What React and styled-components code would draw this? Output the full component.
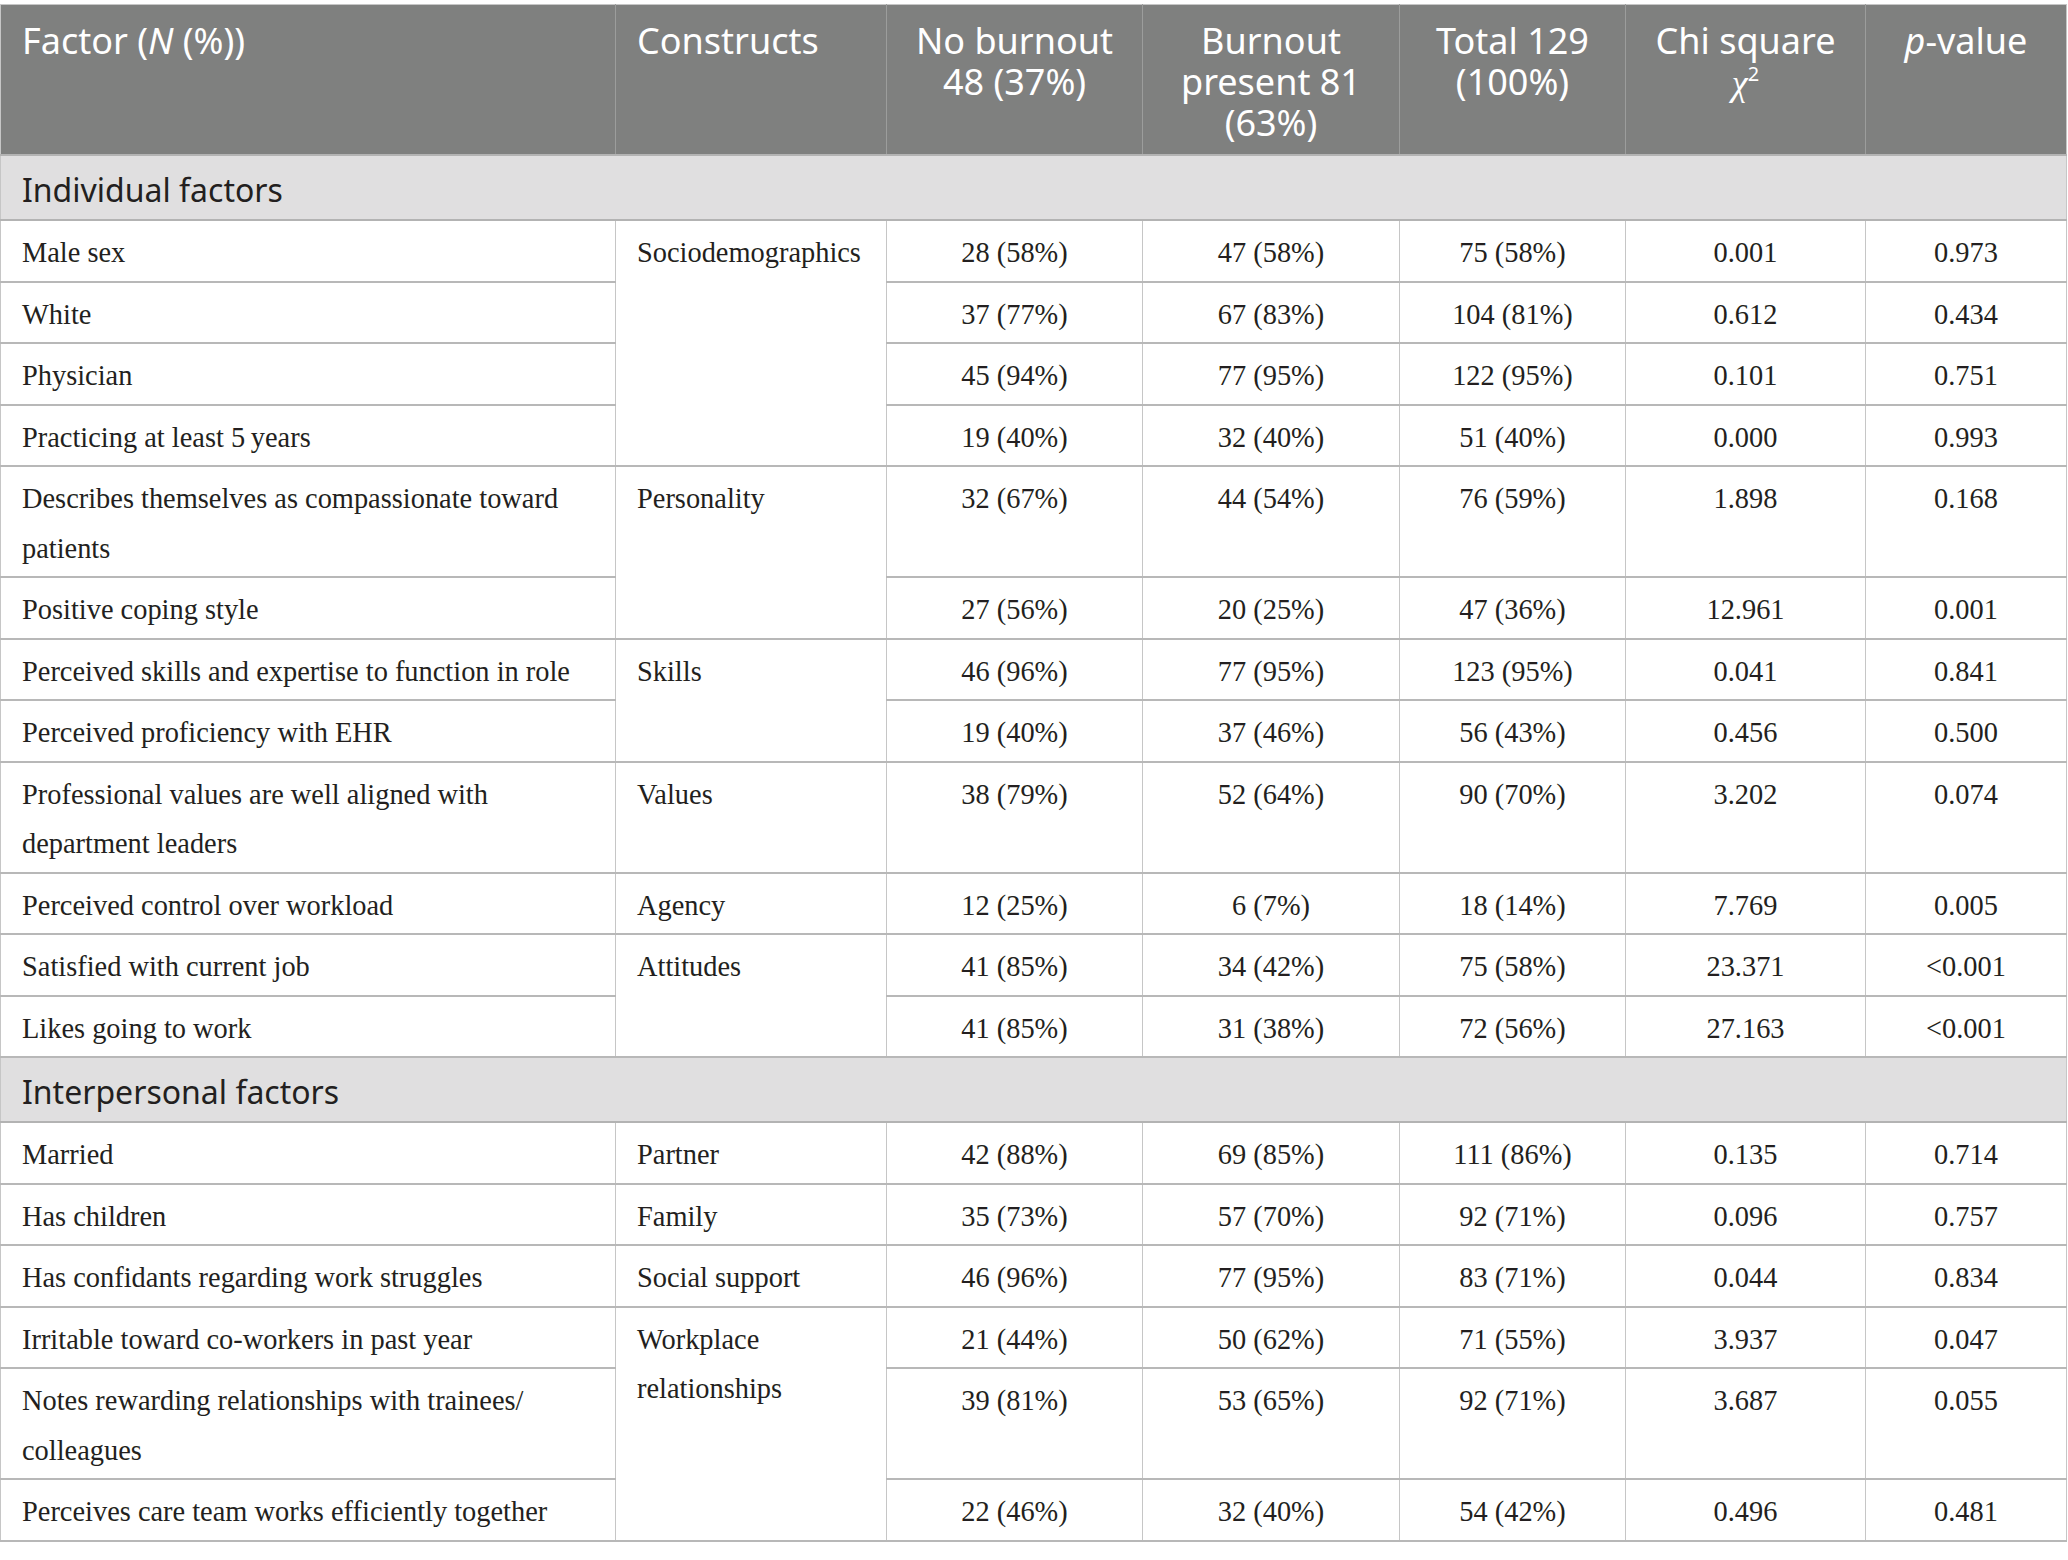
import React from 'react';
import styled, { createGlobalStyle } from 'styled-components';

const GlobalStyle = createGlobalStyle`
  html, body {
    margin: 0;
    padding: 0;
    background: #ffffff;
  }
`;

const Page = styled.div`
  padding-top: 4px;
  width: 2068px;
`;

const Table = styled.table`
  width: 2066px;
  table-layout: fixed;
  border-collapse: collapse;
  border: 1px solid #c6c6c6;
  border-bottom: 2px solid #b3b3b3;
`;

const HeadCell = styled.th`
  background: #7f807f;
  color: #ffffff;
  font-family: "Noto Sans", "Open Sans", sans-serif;
  font-weight: 400;
  font-size: 36px;
  line-height: 41px;
  text-align: ${(p) => p.$align || 'center'};
  vertical-align: top;
  padding: 15px 21px 11px;
  border-left: 1px solid #9c9d9c;
  border-bottom: 2px solid #b3b3b3;
  &:first-child {
    border-left: none;
  }
`;

const BandCell = styled.td`
  background: #e0dfe0;
  color: #231f20;
  font-family: "Noto Sans", "Open Sans", sans-serif;
  font-size: 32px;
  line-height: 41px;
  padding: 13px 21px 9px;
  border-bottom: 2px solid #b3b3b3;
`;

const Cell = styled.td`
  color: #231f20;
  font-family: "Liberation Serif", "Times New Roman", serif;
  font-size: 28.4px;
  line-height: 49.5px;
  text-align: ${(p) => p.$align || 'center'};
  vertical-align: top;
  padding: 7px 21px 3px;
  border-left: 1px solid #c6c6c6;
  border-bottom: 2px solid #b8b8b8;
  &:first-child {
    border-left: none;
  }
`;

const Em = styled.i`
  font-style: italic;
`;

const Chi = styled.span`
  font-family: "Liberation Serif", serif;
  font-style: italic;
  font-size: 36px;
`;

const Sup = styled.sup`
  font-size: 20px;
  line-height: 0;
  vertical-align: 14px;
`;

const widths = [615, 271, 256, 257, 226, 240, 201];

const sections = [
  {
    title: 'Individual factors',
    rows: [
      ['Male sex', ['Sociodemographics', 4], '28 (58%)', '47 (58%)', '75 (58%)', '0.001', '0.973'],
      ['White', null, '37 (77%)', '67 (83%)', '104 (81%)', '0.612', '0.434'],
      ['Physician', null, '45 (94%)', '77 (95%)', '122 (95%)', '0.101', '0.751'],
      ['Practicing at least 5\u2009years', null, '19 (40%)', '32 (40%)', '51 (40%)', '0.000', '0.993'],
      [['Describes themselves as compassionate toward', 'patients'], ['Personality', 2], '32 (67%)', '44 (54%)', '76 (59%)', '1.898', '0.168'],
      ['Positive coping style', null, '27 (56%)', '20 (25%)', '47 (36%)', '12.961', '0.001'],
      ['Perceived skills and expertise to function in role', ['Skills', 2], '46 (96%)', '77 (95%)', '123 (95%)', '0.041', '0.841'],
      ['Perceived proficiency with EHR', null, '19 (40%)', '37 (46%)', '56 (43%)', '0.456', '0.500'],
      [['Professional values are well aligned with', 'department leaders'], ['Values', 1], '38 (79%)', '52 (64%)', '90 (70%)', '3.202', '0.074'],
      ['Perceived control over workload', ['Agency', 1], '12 (25%)', '6 (7%)', '18 (14%)', '7.769', '0.005'],
      ['Satisfied with current job', ['Attitudes', 2], '41 (85%)', '34 (42%)', '75 (58%)', '23.371', '<0.001'],
      ['Likes going to work', null, '41 (85%)', '31 (38%)', '72 (56%)', '27.163', '<0.001'],
    ],
  },
  {
    title: 'Interpersonal factors',
    rows: [
      ['Married', ['Partner', 1], '42 (88%)', '69 (85%)', '111 (86%)', '0.135', '0.714'],
      ['Has children', ['Family', 1], '35 (73%)', '57 (70%)', '92 (71%)', '0.096', '0.757'],
      ['Has confidants regarding work struggles', ['Social support', 1], '46 (96%)', '77 (95%)', '83 (71%)', '0.044', '0.834'],
      ['Irritable toward co-workers in past year', [['Workplace', 'relationships'], 3], '21 (44%)', '50 (62%)', '71 (55%)', '3.937', '0.047'],
      [['Notes rewarding relationships with trainees/', 'colleagues'], null, '39 (81%)', '53 (65%)', '92 (71%)', '3.687', '0.055'],
      ['Perceives care team works efficiently together', null, '22 (46%)', '32 (40%)', '54 (42%)', '0.496', '0.481'],
    ],
  },
];

const Lines = ({ text }) => {
  if (!Array.isArray(text)) return text;
  return text.map((t, i) => (
    <React.Fragment key={i}>
      {i > 0 && <br />}
      {t}
    </React.Fragment>
  ));
};

const App = () => (
  <Page>
    <GlobalStyle />
    <Table>
      <colgroup>
        {widths.map((w, i) => <col key={i} style={{ width: w }} />)}
      </colgroup>
      <thead>
        <tr>
          <HeadCell $align='left'>Factor (<Em>N</Em> (%))</HeadCell>
          <HeadCell $align='left'>Constructs</HeadCell>
          <HeadCell>No burnout<br />48 (37%)</HeadCell>
          <HeadCell>Burnout<br />present 81<br />(63%)</HeadCell>
          <HeadCell>Total 129<br />(100%)</HeadCell>
          <HeadCell>Chi square<br /><Chi>χ</Chi><Sup>2</Sup></HeadCell>
          <HeadCell><Em>p</Em>-value</HeadCell>
        </tr>
      </thead>
      <tbody>
        {sections.map((section) => (
          <React.Fragment key={section.title}>
            <tr>
              <BandCell colSpan={7}>{section.title}</BandCell>
            </tr>
            {section.rows.map((row, r) => (
              <tr key={r}>
                <Cell $align='left'><Lines text={row[0]} /></Cell>
                {row[1] && (
                  <Cell $align='left' rowSpan={row[1][1]}><Lines text={row[1][0]} /></Cell>
                )}
                {row.slice(2).map((v, c) => <Cell key={c}>{v}</Cell>)}
              </tr>
            ))}
          </React.Fragment>
        ))}
      </tbody>
    </Table>
  </Page>
);

export default App;
